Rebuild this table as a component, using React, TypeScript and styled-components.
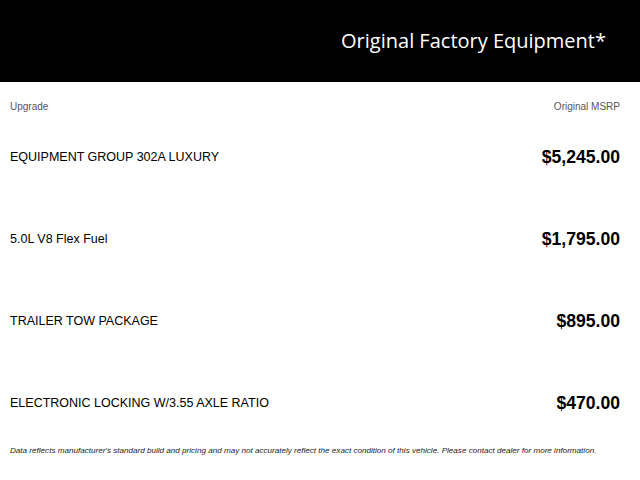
import styled, { createGlobalStyle } from "styled-components";

const Global = createGlobalStyle`
  body {
    margin: 0;
    background: #fff;
    font-family: "Liberation Sans", Arial, sans-serif;
  }
`;

const Header = styled.header`
  display: flex;
  justify-content: flex-end;
  align-items: center;
  height: 82px;
  background: #000;
  padding-right: 34px;
`;

const Title = styled.h1`
  margin: 0;
  color: #fff;
  font-family: "Open Sans", sans-serif;
  font-weight: 400;
  font-size: 20px;
  line-height: 26px;
`;

const Table = styled.div`
  padding: 0 20px 0 10px;
`;

const Labels = styled.div`
  display: flex;
  justify-content: space-between;
  padding-top: 18px;
  height: 16px;
  font-size: 10px;
  line-height: 14px;
  color: #555;
`;

const Row = styled.div`
  display: flex;
  justify-content: space-between;
  align-items: center;
  height: 82px;
`;

const Name = styled.span`
  font-size: 12.5px;
  color: #000;
`;

const Price = styled.span`
  font-size: 17.6px;
  font-weight: 700;
  color: #000;
`;

const Note = styled.p`
  margin: 0;
  padding-top: 1px;
  font-size: 8.1px;
  line-height: 12px;
  font-style: italic;
  color: #222;
`;

const items = [
  { name: "EQUIPMENT GROUP 302A LUXURY", price: "$5,245.00" },
  { name: "5.0L V8 Flex Fuel", price: "$1,795.00" },
  { name: "TRAILER TOW PACKAGE", price: "$895.00" },
  { name: "ELECTRONIC LOCKING W/3.55 AXLE RATIO", price: "$470.00" },
];

function App() {
  return (
    <>
      <Global />
      <Header>
        <Title>Original Factory Equipment*</Title>
      </Header>
      <Table>
        <Labels>
          <span>Upgrade</span>
          <span>Original MSRP</span>
        </Labels>
        {items.map((item) => (
          <Row key={item.name}>
            <Name>{item.name}</Name>
            <Price>{item.price}</Price>
          </Row>
        ))}
        <Note>
          Data reflects manufacturer's standard build and pricing and may not
          accurately reflect the exact condition of this vehicle. Please contact
          dealer for more information.
        </Note>
      </Table>
    </>
  );
}

export default App;
